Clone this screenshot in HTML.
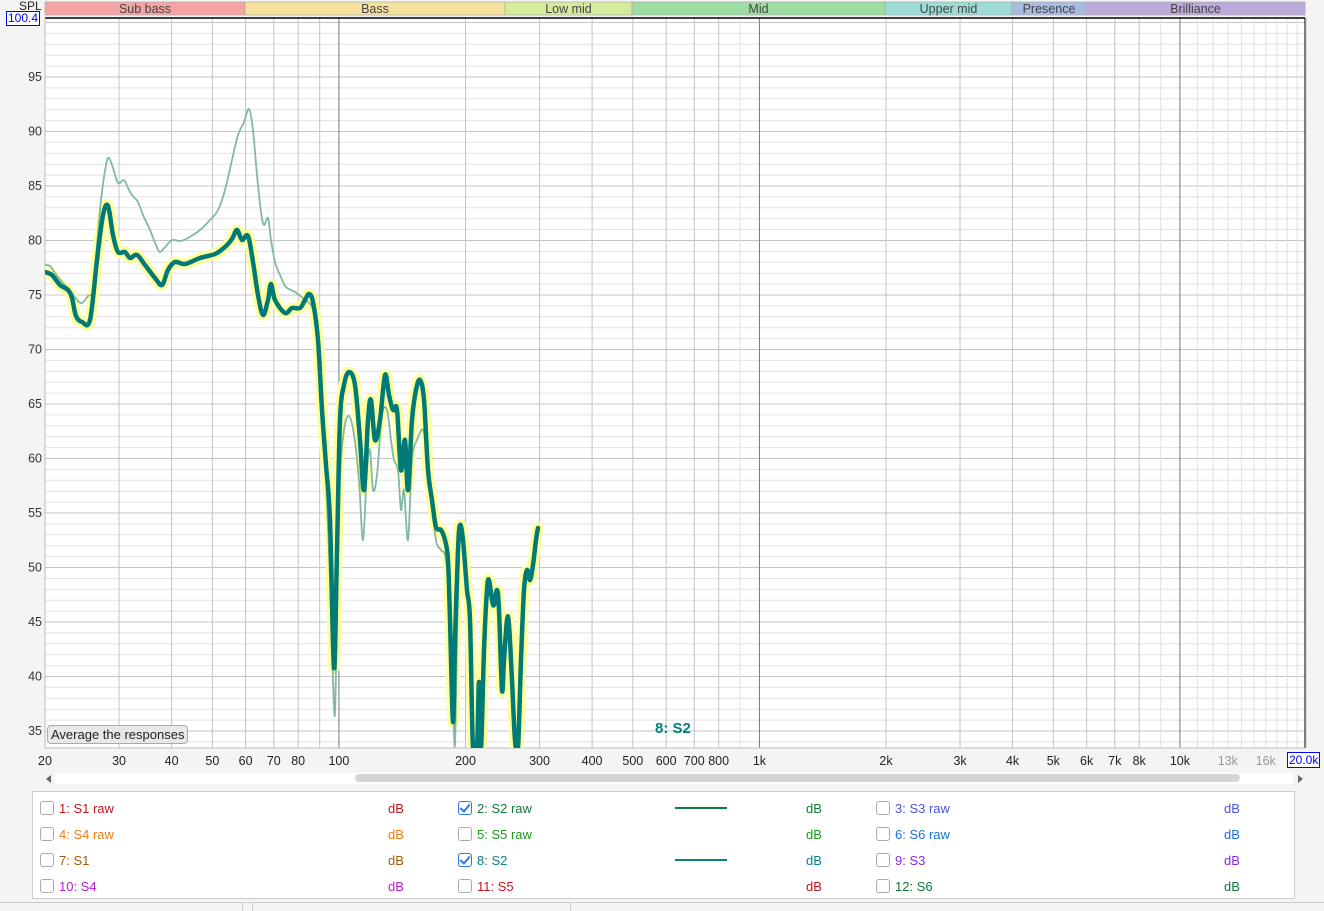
<!DOCTYPE html>
<html><head><meta charset="utf-8">
<style>
body{margin:0;width:1324px;height:911px;background:#f4f4f4;font-family:"Liberation Sans",sans-serif;overflow:hidden;position:relative}
.t{position:absolute;font-size:12px;color:#222;white-space:nowrap}
.lg{position:absolute;left:32px;top:791px;width:1261px;height:106px;background:#fff;border:1px solid #ccc}
.cb{position:absolute;width:12px;height:12px;border:1px solid #aaa;border-radius:3px;background:#fff}
.cb.on{border-color:#2a7ae2}
.cb.on:after{content:"";position:absolute;left:3px;top:0px;width:4px;height:8px;border:solid #2a7ae2;border-width:0 2px 2px 0;transform:rotate(40deg)}
.l{position:absolute;font-size:13px;white-space:nowrap}
</style></head><body>
<svg id="s" width="1324" height="911" style="position:absolute;left:0;top:0"></svg>
<div class="t" style="left:19px;top:-1px;font-size:12px">SPL</div>
<div class="t" style="left:6px;top:11px;border:1px solid #00f;color:#00f;background:#fff;padding:0 1px;line-height:13px">100.4</div>
<div style="position:absolute;left:47px;top:725px;border:1px solid #aaa;border-radius:4px;background:#e8e8e8;font-size:13px;padding:1px 3px;color:#222">Average the responses</div>
<div style="position:absolute;left:655px;top:720px;font-size:15px;color:#008080;font-weight:bold">8: S2</div>
<div style="position:absolute;left:1287px;top:752px;border:1px solid #00f;color:#00f;background:#fff;font-size:12px;padding:0 1px;line-height:14px">20.0k</div>
<div style="position:absolute;left:46px;top:775px;width:0;height:0;border:4px solid transparent;border-right:5px solid #666;border-left:0"></div>
<div style="position:absolute;left:55px;top:773px;width:1238px;height:11px;background:#fff"></div>
<div style="position:absolute;left:355px;top:774px;width:885px;height:8px;background:#d6d6d6;border-radius:4px"></div>
<div style="position:absolute;left:1298px;top:775px;width:0;height:0;border:4px solid transparent;border-left:5px solid #666;border-right:0"></div>
<div class="lg"></div>
<div style="position:absolute;left:0;top:902px;width:1324px;height:1px;background:#ccc"></div>
<div style="position:absolute;left:242px;top:903px;width:1px;height:8px;background:#ccc"></div>
<div style="position:absolute;left:252px;top:903px;width:1px;height:8px;background:#ccc"></div>
<div style="position:absolute;left:570px;top:903px;width:1px;height:8px;background:#ccc"></div>
<div id="leg"></div>
<script>
const S=document.getElementById('s');let h='';
const X=f=>45+(Math.log10(f)-Math.log10(20))*420.5;
const Y=d=>77+(95-d)*10.9;
const bands=[[45,245,'#f5a3a3','Sub bass'],[245,505,'#f6e29c','Bass'],[505,632,'#d6ea9c'
,'Low mid'],[632,885,'#9ddca2','Mid'],[885,1012,'#9cdcd6','Upper mid'],[1012,1086,'#aabbe2','Presence'],[1086,1305,'#bcaadb','Brilliance']];
for(const b of bands){h+=`<rect x="${b[0]}" y="2" width="${b[1]-b[0]}" height="13" fill="${b[2]}" stroke="#aaa" stroke-width="0.7"/><text x="${(b[0]+b[1])/2}" y="13" font-size="12.5" text-anchor="middle" fill="#444" font-family="Liberation Sans">${b[3]}</text>`}
h+=`<rect x="45" y="18" width="1260" height="730" fill="#fff"/>`;
for(let d=34;d<=100;d++){const y=Y(d);if(y<18||y>748)continue;h+=`<line x1="45" x2="1305" y1="${y}" y2="${y}" stroke="${d%5?'#e2e2e2':'#c4c4c4'}" stroke-width="1"/>`;if(d%5==0&&d<100)h+=`<text x="42" y="${y+4}" font-size="12.5" text-anchor="end" fill="#333" font-family="Liberation Sans">${d}</text>`}
let fs=[];for(let f=20;f<100;f+=10)fs.push(f);for(let f=100;f<1000;f+=100)fs.push(f);for(let f=1000;f<10000;f+=1000)fs.push(f);for(let f=10000;f<=20000;f+=1000)fs.push(f);
const maj=[30,40,50,60,70,80,200,300,400,500,600,700,800,2000,3000,4000,5000,6000,7000,8000];
for(const f of fs){const x=X(f);let c='#e2e2e2';if(maj.includes(f)||f<100)c='#c4c4c4';if(f==100||f==1000||f==10000)c='#777';h+=`<line x1="${x}" x2="${x}" y1="18" y2="748" stroke="${c}"/>`}
h+=`<line x1="45" x2="1305" y1="18" y2="18" stroke="#000" stroke-width="1.5"/><line x1="1305" x2="1305" y1="18" y2="748" stroke="#000"/><line x1="45" x2="45" y1="18" y2="748" stroke="#bbb"/><line x1="45" x2="1305" y1="748" y2="748" stroke="#bbb"/>`;
const labs=[[20,'20'],[30,'30'],[40,'40'],[50,'50'],[60,'60'],[70,'70'],[80,'80'],[100,'100'],[200,'200'],[300,'300'],[400,'400'],[500,'500'],[600,'600'],[700,'700'],[800,'800'],[1000,'1k'],[2000,'2k'],[3000,'3k'],[4000,'4k'],[5000,'5k'],[6000,'6k'],[7000,'7k'],[8000,'8k'],[10000,'10k'],[13000,'13k'],[16000,'16k']];
for(const l of labs){h+=`<text x="${X(l[0])}" y="765" font-size="12.5" text-anchor="middle" fill="${l[0]>10000?'#999':'#222'}" font-family="Liberation Sans">${l[1]}</text>`}
const raw=[[45,265],[50,266],[55,273],[62,282],[68,288],[72,293],[77,300],[82,303],[88,296],[93,290],[97,245],[101,200],[106,165],[109,158],[113,168],[118,183],[124,180],[128,188],[132,195],[138,202],[143,215],[150,230],[156,245],[160,252],[166,246],[172,240],[180,241],[188,238],[200,230],[210,220],[218,210],[225,190],[232,160],[238,135],[244,122],[249,109],[253,130],[257,175],[261,212],[264,225],[268,218],[271,240],[275,262],[280,275],[286,287],[295,292],[305,300],[313,310],[318,350],[322,420],[326,480],[330,580],[333,680],[335,713],[337,610],[340,480],[344,430],[349,416],[354,435],[359,480],[363,540],[367,470],[370,450],[373,490],[377,475],[382,415],[387,410],[391,440],[394,460],[398,470],[401,510],[404,490],[408,540],[412,460],[417,440],[423,430],[427,455],[431,495],[436,540],[441,550],[446,560],[450,620],[453,700],[455,745],[457,640],[460,530],[463,545],[467,590],[470,620],[473,748],[477,748],[479,682],[481,748],[484,650],[487,590],[489,580],[492,600],[494,605],[497,590],[499,610],[502,690],[504,660],[507,620],[509,625],[512,680],[515,740],[518,748],[521,660],[524,590],[527,570],[530,580],[533,565],[536,540],[538,528]];
const th=[[45,272],[52,275],[60,285],[68,290],[72,298],[76,316],[82,322],[90,320],[97,260],[103,215],[108,206],[113,235],[118,252],[125,252],[130,258],[137,255],[145,265],[155,278],[162,285],[168,270],[175,262],[185,264],[200,258],[215,254],[225,247],[232,239],[237,230],[242,240],[248,236],[253,262],[258,295],[263,315],[268,300],[271,284],[275,300],[285,313],[292,308],[300,308],[305,300],[309,294],[313,302],[318,340],[322,410],[326,465],[330,520],[334,668],[337,550],[340,420],[344,385],[349,372],[355,385],[360,440],[364,490],[368,420],[371,400],[375,440],[380,420],[385,375],[389,395],[393,410],[397,410],[401,470],[405,440],[408,490],[412,420],[416,390],[420,380],[424,400],[428,470],[432,500],[436,527],[441,530],[445,540],[448,560],[450,620],[453,722],[455,640],[458,550],[460,525],[463,540],[467,590],[470,620],[473,748],[477,748],[479,682],[481,748],[484,650],[487,590],[489,580],[492,600],[494,605],[497,590],[499,610],[502,690],[504,660],[507,620],[509,625],[512,680],[515,740],[518,748],[521,660],[524,590],[527,570],[530,580],[533,565],[536,540],[538,528]];
function sm(p){let d=`M${p[0][0]},${p[0][1]}`;for(let i=0;i<p.length-1;i++){const a=p[i-1]||p[i],b=p[i],c=p[i+1],e=p[i+2]||c;d+=` C${b[0]+(c[0]-a[0])/6},${b[1]+(c[1]-a[1])/6} ${c[0]-(e[0]-b[0])/6},${c[1]-(e[1]-b[1])/6} ${c[0]},${c[1]}`}return d}
h+=`<defs><clipPath id="c"><rect x="45" y="18" width="1260" height="730"/></clipPath></defs><g clip-path="url(#c)" fill="none" stroke-linejoin="round" stroke-linecap="round">`;
h+=`<path d="${sm(th)}" stroke="#ffff9c" stroke-width="11"/>`;
h+=`<path d="${sm(raw)}" stroke="#82b9a2" stroke-width="1.8"/>`;
h+=`<path d="${sm(th)}" stroke="#007a76" stroke-width="4.5"/></g>`;
S.innerHTML=h;
const L=[
[46,59,396,'1: S1 raw','#c4141c',0,808],[464,477,814,'2: S2 raw','#0f7a3a',1,808],[882,895,1232,'3: S3 raw','#4a55d8',0,808],
[46,59,396,'4: S4 raw','#ee7d12',0,834],[464,477,814,'5: S5 raw','#1a9a1a',0,834],[882,895,1232,'6: S6 raw','#1a72d8',0,834],
[46,59,396,'7: S1','#a45a0a',0,860],[464,477,814,'8: S2','#0a8080',1,860],[882,895,1232,'9: S3','#8a2ae6',0,860],
[46,59,396,'10: S4','#b41ecf',0,886],[464,477,814,'11: S5','#c4141c',0,886],[882,895,1232,'12: S6','#0f7a3a',0,886]];
let g='';
for(const r of L){g+=`<div class="cb${r[5]?' on':''}" style="left:${r[0]-6}px;top:${r[6]-7}px"></div><div class="l" style="left:${r[1]}px;top:${r[6]-7}px;color:${r[4]}">${r[3]}</div><div class="l" style="left:${r[2]-8}px;top:${r[6]-7}px;color:${r[4]}">dB</div>`;
if(r[5])g+=`<div style="position:absolute;left:675px;top:${r[6]-1}px;width:52px;height:2px;background:${r[4]}"></div>`}
document.getElementById('leg').innerHTML=g;
</script>
</body></html>
